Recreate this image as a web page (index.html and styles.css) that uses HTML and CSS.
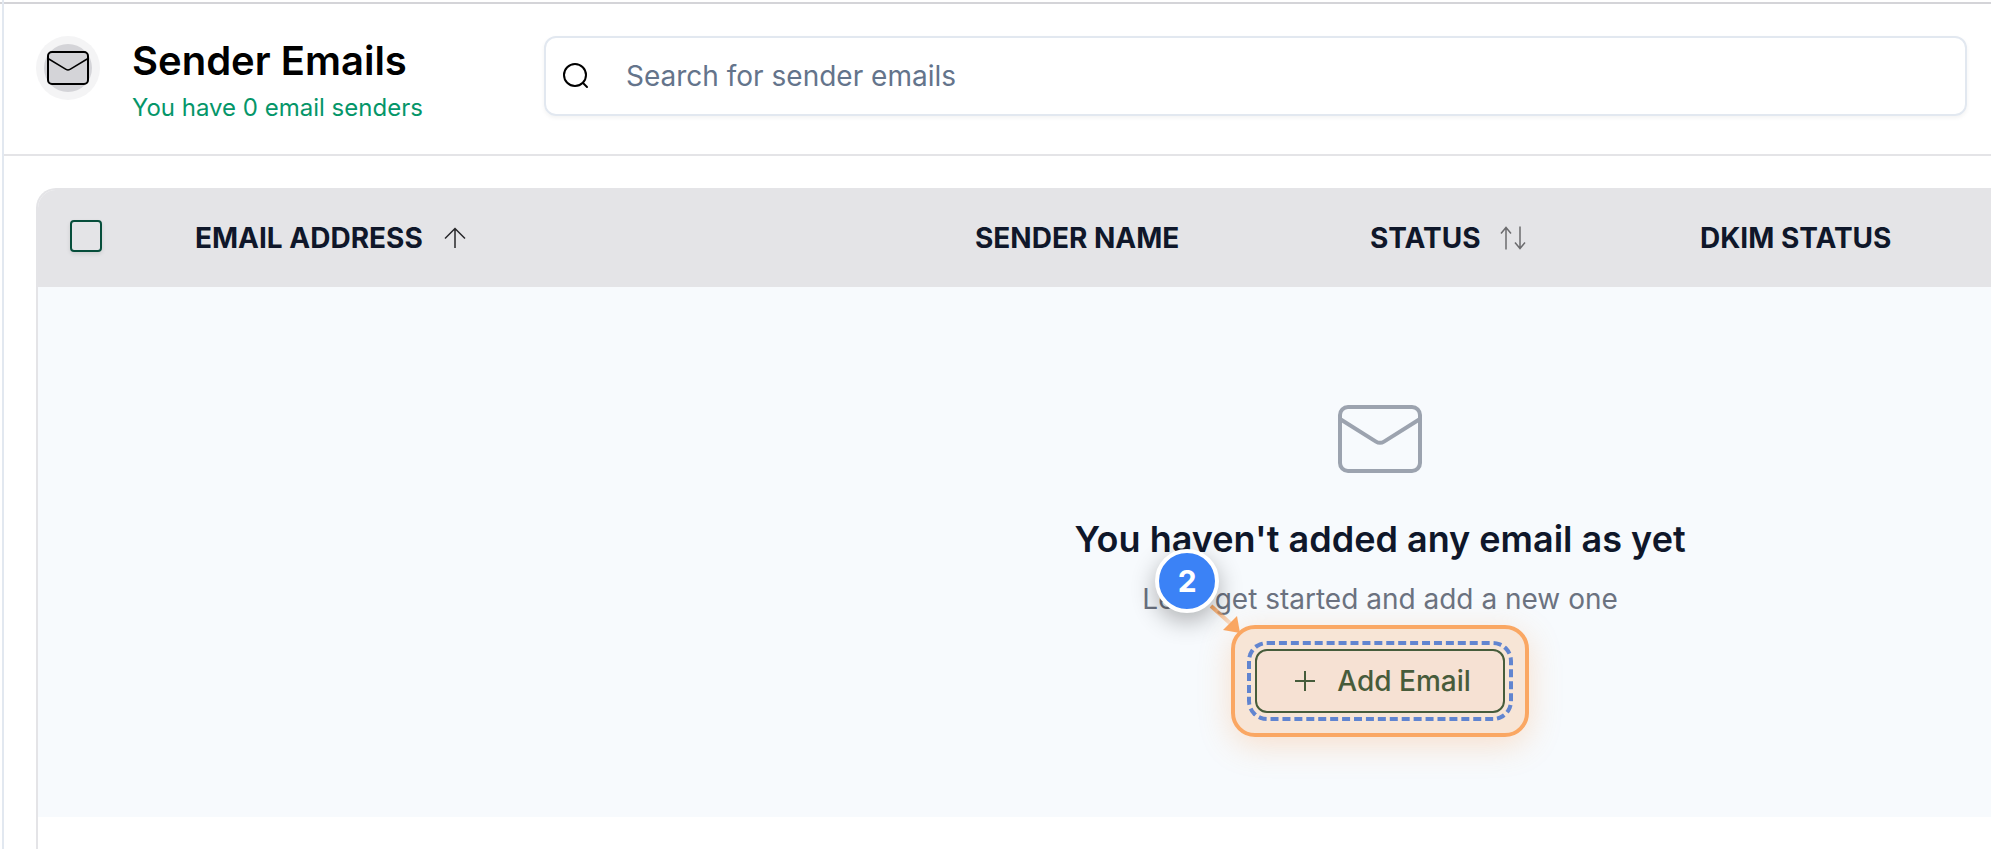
FILE: index.html
```html
<!DOCTYPE html>
<html lang="en">
<head>
    <meta charset="UTF-8">
    <meta name="viewport" content="width=device-width, initial-scale=1.0">
    <title>Sender Emails</title>
    <link rel="stylesheet" href="styles.css">
</head>
<body>
    <div class="sidebar-edge"><div class="sidebar-line"></div></div>
    <main class="page">
        <header class="page-header">
            <div class="header-icon">
                <div class="header-icon-inner">
                    <svg width="42" height="34" viewBox="0 0 42 34" fill="none" stroke="#000000" stroke-width="2" stroke-linejoin="round">
                        <rect x="1" y="1" width="40" height="32" rx="4"/>
                        <path d="M1 7.5L19 18.4Q21 19.6 23 18.4L41 7.5" stroke-width="1.5"/>
                    </svg>
                </div>
            </div>
            <div class="header-text">
                <h1>Sender Emails</h1>
                <p>You have 0 email senders</p>
            </div>
            <label class="search" for="search">
                <svg width="32" height="32" viewBox="0 0 32 32" fill="none" stroke="#000000" stroke-width="2" stroke-linecap="round">
                    <circle cx="15" cy="15" r="11"/>
                    <path d="M23 23l4 4"/>
                </svg>
                <input type="text" id="search" placeholder="Search for sender emails" aria-label="Search for sender emails">
            </label>
        </header>

        <section class="content">
            <div class="table-wrap">
                <table>
                    <thead>
                        <tr>
                            <th class="col-check"><input type="checkbox" class="checkbox" aria-label="Select all"></th>
                            <th class="col-email">
                                <button type="button" class="sort">EMAIL ADDRESS
                                    <svg width="24" height="24" viewBox="0 0 24 24" fill="none" stroke="#27272a" stroke-width="1.5">
                                        <path d="M12 22V3M2 12.5L12 2.5l10 10"/>
                                    </svg>
                                </button>
                            </th>
                            <th class="col-name">SENDER NAME</th>
                            <th class="col-status">
                                <button type="button" class="sort">STATUS
                                    <svg width="28" height="24" viewBox="0 0 28 24" fill="none" stroke="#6b6b6e" stroke-width="1.5">
                                        <path d="M6 23.5V1.5M1 7.5l5-6 5 6M20 .5v22M15 16.500l5 6 5-6"/>
                                    </svg>
                                </button>
                            </th>
                            <th>DKIM STATUS</th>
                        </tr>
                    </thead>
                    <tbody>
                        <tr>
                            <td colspan="5">
                                <div class="empty">
                                    <svg width="84" height="68" viewBox="0 0 84 68" fill="none" stroke="#9ca3af" stroke-width="4" stroke-linejoin="round">
                                        <rect x="2" y="2" width="80" height="64" rx="8"/>
                                        <path d="M2 14L38 36.600Q42 39 46 36.600L82 14"/>
                                    </svg>
                                    <h2>You haven't added any email as yet</h2>
                                    <p>Let's get started and add a new one</p>
                                    <div class="add-wrap">
                                        <button type="button" class="add-button">
                                            <svg width="20" height="20" viewBox="0 0 20 20" stroke="#1a4f3b" stroke-width="2">
                                                <path d="M10 0v20M0 10h20"/>
                                            </svg>
                                            Add Email
                                        </button>
                                        <div class="highlight"></div>
                                        <svg class="arrow" width="40" height="40" viewBox="0 0 40 40">
                                            <defs>
                                                <linearGradient id="fade" x1="0" y1="0" x2="1" y2="1">
                                                    <stop offset="0" stop-color="#faa763"/>
                                                    <stop offset="1" stop-color="#faa763" stop-opacity="0.3"/>
                                                </linearGradient>
                                            </defs>
                                            <path d="M2 2L22 20" stroke="url(#fade)" stroke-width="4"/>
                                            <path d="M31 29L14 26L28 12Z" fill="#faa763"/>
                                        </svg>
                                        <span class="step">2</span>
                                    </div>
                                </div>
                            </td>
                        </tr>
                    </tbody>
                </table>
            </div>
        </section>
    </main>
</body>
</html>
```
FILE: styles.css
```css
* {
    box-sizing: border-box;
}
body {
    display: flex;
    min-height: 100vh;
    margin: 0;
    background-color: #ffffff;
    font-family: Inter, 'Liberation Sans', sans-serif;
    overflow: hidden;
}
h1, h2, p {
    margin: 0;
}
svg {
    display: block;
    flex: none;
}
.sidebar-edge {
    flex: none;
    width: 4px;
    padding-top: 2px;
    border-right: 2px solid #e2e8f0;
}
.sidebar-line {
    height: 2px;
    background-color: #d4d4d8;
}
.page {
    display: flex;
    flex-direction: column;
    flex: 1;
    min-width: 0;
    padding-top: 2px;
}
.page-header {
    display: flex;
    align-items: flex-start;
    gap: 32px;
    padding: 32px 24px 32px 32px;
    border-top: 2px solid #d4d4d8;
    border-bottom: 2px solid #e4e4e7;
}
.header-icon {
    display: flex;
    flex: none;
    padding: 8px;
    border-radius: 50%;
    background-color: #f4f4f5;
}
.header-icon-inner {
    display: flex;
    align-items: center;
    justify-content: center;
    width: 48px;
    height: 48px;
    border-radius: 50%;
    background-color: #d4d4d8;
}
.header-text {
    flex: none;
    width: 380px;
}
.header-text h1 {
    font-size: 40px;
    line-height: 50px;
    font-weight: 600;
    color: #000000;
}
.header-text p {
    margin-top: 8px;
    font-size: 24px;
    line-height: 28px;
    color: #059669;
}
.search {
    display: flex;
    align-items: center;
    flex: 1;
    gap: 34px;
    height: 80px;
    padding: 0 14px;
    border: 2px solid #e2e8f0;
    border-radius: 12px;
    box-shadow: 0 2px 4px rgba(0, 0, 0, 0.05);
}
.search input {
    flex: 1;
    min-width: 0;
    padding: 0;
    border: none;
    outline: none;
    background: none;
    font-family: inherit;
    font-size: 28px;
}
.search input::placeholder {
    color: #64748b;
    opacity: 1;
}
.content {
    display: flex;
    flex: 1;
    padding: 32px 0 0 32px;
    overflow: hidden;
}
/* wider than the page, the right part scrolls out of view */
.table-wrap {
    flex: none;
    width: 137.5%;
    border: 2px solid #e4e4e7;
    border-bottom: none;
    border-radius: 20px 20px 0 0;
    overflow: hidden;
}
table {
    width: 100%;
    border-collapse: collapse;
    table-layout: fixed;
}
th {
    height: 97px;
    padding: 0 32px 2px;
    background-color: #e4e4e7;
    color: #0f172a;
    font-size: 28px;
    font-weight: 700;
    text-align: left;
}
td {
    padding: 0;
}
.col-check {
    width: 125px;
}
.col-email {
    width: 780px;
}
.col-name {
    width: 395px;
}
.col-status {
    width: 330px;
}
.checkbox {
    display: block;
    appearance: none;
    width: 32px;
    height: 32px;
    margin: 0 0 4px;
    border: 2px solid #064e3b;
    border-radius: 4px;
    box-shadow: 0 2px 4px rgba(0, 0, 0, 0.1);
}
.sort {
    display: flex;
    align-items: center;
    gap: 20px;
    padding: 0;
    border: none;
    background: none;
    color: inherit;
    font: inherit;
}
.empty {
    display: flex;
    flex-direction: column;
    align-items: center;
    height: 530px;
    padding-top: 118px;
    background-color: #f7fafd;
}
.empty h2 {
    margin-top: 44px;
    color: #0f172a;
    font-size: 36px;
    line-height: 44px;
    font-weight: 600;
}
.empty p {
    margin-top: 18px;
    color: #6b7280;
    font-size: 28px;
    line-height: 40px;
}
.add-wrap {
    position: relative;
    margin-top: 30px;
}
.add-button {
    display: flex;
    align-items: center;
    gap: 22px;
    height: 64px;
    padding: 0 32px 0 38px;
    border: 2px solid #1a4f3b;
    border-radius: 12px;
    outline: 4px dashed #3b82f6;
    outline-offset: 4px;
    background-color: #f5f5f9;
    color: #1a4f3b;
    font-family: inherit;
    font-size: 28px;
    font-weight: 500;
}
.highlight {
    position: absolute;
    inset: -24px;
    border: 4px solid #faa763;
    border-radius: 24px;
    background-color: rgba(251, 146, 60, 0.2);
    box-shadow: 0 8px 32px rgba(251, 146, 60, 0.25);
}
.arrow {
    position: absolute;
    top: -45px;
    left: -46px;
}
.step {
    position: absolute;
    top: -100px;
    left: -100px;
    display: flex;
    align-items: center;
    justify-content: center;
    width: 64px;
    height: 64px;
    border: 4px solid #ffffff;
    border-radius: 50%;
    background-color: #3b82f6;
    box-shadow: 0 8px 24px rgba(0, 0, 0, 0.3);
    color: #ffffff;
    font-size: 30px;
    font-weight: 700;
}
```
